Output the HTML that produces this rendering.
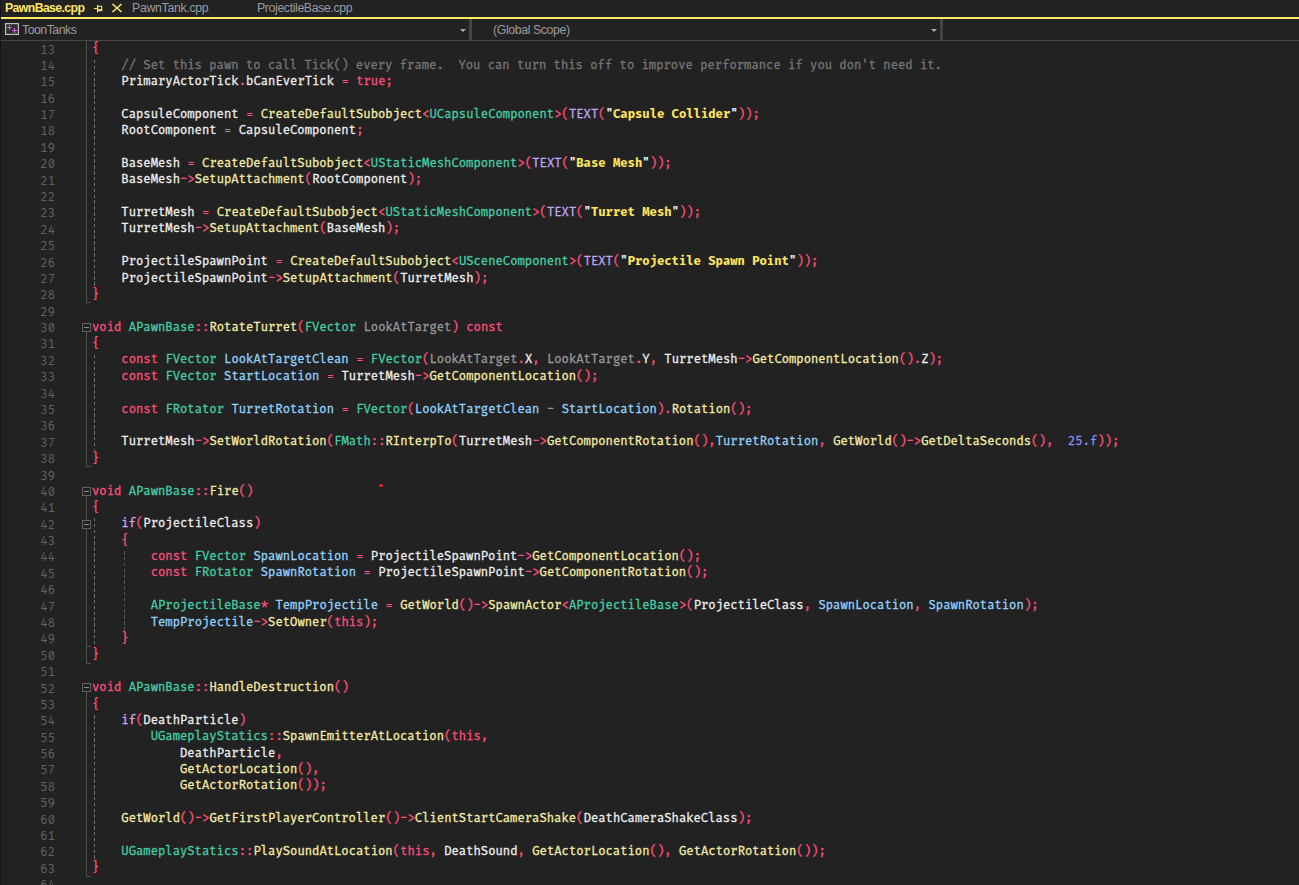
<!DOCTYPE html>
<html lang="en"><head><meta charset="utf-8"><title>PawnBase.cpp</title>
<style>
*{margin:0;padding:0;box-sizing:border-box}
html,body{width:1299px;height:885px;overflow:hidden;background:#222222}
body{position:relative;font-family:"Liberation Sans", "DejaVu Sans", sans-serif;-webkit-font-smoothing:antialiased}
.abs{position:absolute}
#edge{left:0;top:0;width:1px;height:885px;background:#161616}
#tabs{left:0;top:0;width:1299px;height:17px}
#tabs span{position:absolute;top:0;height:17px;line-height:17px;white-space:pre;font-size:12.3px}
#t1{left:5px;color:#ffe666;font-weight:bold;letter-spacing:-0.62px}
#t2{left:132px;color:#9a9aa2;letter-spacing:-0.3px}
#t3{left:257px;color:#9a9aa2;letter-spacing:-0.37px}
#yl{left:1px;top:17px;width:1298px;height:2px;background:#fdea60}
#nav{left:0;top:19px;width:1299px;height:22px;border-bottom:1px solid #464646}
#nav span{position:absolute;top:0;height:21px;line-height:23px;white-space:pre;font-size:12.3px;color:#9a9aa2;letter-spacing:-0.5px}
.sep{position:absolute;top:0;width:3px;height:21px;background:#444}
.arr{position:absolute;top:10px;width:0;height:0;border-left:3.5px solid transparent;border-right:3.5px solid transparent;border-top:3.5px solid #aaa}
#code{left:0;top:0;width:1299px;height:885px;font-family:"Fira Code", "DejaVu Sans Mono", "Liberation Mono", monospace;font-size:12.0px;font-size-adjust:ch-width 0.6115;font-variant-ligatures:none;font-feature-settings:"liga" 0,"calt" 0;font-weight:400;-webkit-text-stroke:0.3px}
.ln{position:absolute;left:0;width:55px;text-align:right;color:#636363;font-weight:400;-webkit-text-stroke:0;height:12px;line-height:0;white-space:pre}
.cl{position:absolute;left:0;width:1299px;height:12px;color:#f0f0f0;line-height:0;white-space:pre}
.cl span{position:absolute;top:0;display:block;line-height:0}
.cl span::before,.ln::before{content:"";display:inline-block;width:0;height:12px;vertical-align:baseline}
.k{color:#ff4f7c}
.t{color:#45d1a7}
.f{color:#f6eda6}
.s{color:#ffe45e;font-weight:bold;-webkit-text-stroke:0}
.q{color:#e8e8e8;font-weight:bold;-webkit-text-stroke:0}
.m{color:#bfa8f7}
.c{color:#dca2f2}
.n{color:#8e8df8}
.v{color:#92d4ff}
.p{color:#9b9b9b}
.cm{color:#787878}
.g{color:#999999}
.i{color:#f0f0f0}

.fl{position:absolute;left:86px;width:1px;background:#4e4e4e}
.fh{position:absolute;left:86px;width:5px;height:1px;background:#4e4e4e}
.fb{position:absolute;left:82px;width:9px;height:9px;border:1px solid #606060;background:#222}
.fb i{position:absolute;left:1px;top:3px;width:5px;height:1px;background:#8c8c8c}
.ig{position:absolute;width:1px;background:repeating-linear-gradient(to bottom,var(--c) 0,var(--c) 3.5px,transparent 3.5px,transparent 5.85px)}
</style></head>
<body>
<div id="tabs" class="abs"><span id="t1">PawnBase.cpp</span><svg class="abs" style="left:93px;top:4px" width="11" height="10" viewBox="0 0 11 10"><path d="M0.8 4.5H4.6" stroke="#ffe666" stroke-width="1.1" fill="none"/><path d="M4.6 0.9V8.4" stroke="#ffe666" stroke-width="1.2" fill="none"/><path d="M4.6 2.2H9.25M8.7 2.2V6" stroke="#ffe666" stroke-width="1.05" fill="none"/><rect x="4.6" y="5.2" width="4.65" height="2" fill="#ffe666"/></svg><svg class="abs" style="left:111px;top:3px" width="12" height="10" viewBox="0 0 12 10"><path d="M1.5 1L10.5 9M10.5 1L1.5 9" stroke="#ffe666" stroke-width="1.6" fill="none"/></svg><span id="t2">PawnTank.cpp</span><span id="t3">ProjectileBase.cpp</span></div>
<div id="yl" class="abs"></div>
<div id="nav" class="abs"><svg class="abs" style="left:5px;top:4px" width="14" height="12" viewBox="0 0 14 12"><rect x="0.6" y="0.6" width="12.8" height="10.8" fill="#2d2d2d" stroke="#bebebe" stroke-width="1.2"/><path d="M2 4.5H7M4.5 2V7M7 7.5H12M9.5 5V10" stroke="#cf62dc" stroke-width="1.15" fill="none"/></svg><span style="left:22px">ToonTanks</span><i class="arr" style="left:460px"></i><i class="sep" style="left:469px"></i><span style="left:493px;letter-spacing:-0.38px">(Global Scope)</span><i class="arr" style="left:931px"></i><i class="sep" style="left:940px"></i></div>
<div id="code" class="abs"><div class="fl" style="top:41px;height:261px"></div><div class="fh" style="top:302px"></div>
<div class="fl" style="top:332.0px;height:134.0px"></div><div class="fh" style="top:466px"></div>
<div class="fl" style="top:495.85px;height:167.15px"></div><div class="fh" style="top:663px"></div>
<div class="fl" style="top:692.47px;height:183.53px"></div><div class="fh" style="top:876px"></div>
<div class="fh" style="top:646px"></div>
<div class="fb" style="top:323px"><i></i></div>
<div class="fb" style="top:487px"><i></i></div>
<div class="fb" style="top:520px"><i></i></div>
<div class="fb" style="top:683px"><i></i></div>
<div class="ig" style="left:94px;top:59.59px;height:226.89px;--c:#707070"></div>
<div class="ig" style="left:94px;top:354.52px;height:95.81px;--c:#707070"></div>
<div class="ig" style="left:94px;top:518.37px;height:128.58px;--c:#707070"></div>
<div class="ig" style="left:124px;top:551.14px;height:79.42px;--c:#565656"></div>
<div class="ig" style="left:94px;top:714.99px;height:144.97px;--c:#707070"></div>
<div class="abs" style="left:379.2px;top:483.5px;width:3.8px;height:3.8px;background:#f01c20;border-radius:50%"></div>
<div class="ln" style="top:42px">13</div>
<div class="cl" style="top:40px"><span class="k" style="left:92.0px">{</span></div>
<div class="ln" style="top:58px">14</div>
<div class="cl" style="top:57px"><span class="cm" style="left:121.35px">// Set this pawn to call Tick() every frame.  You can turn this off to improve performance if you don't need it.</span></div>
<div class="ln" style="top:74px">15</div>
<div class="cl" style="top:73px"><span class="i" style="left:121.35px">PrimaryActorTick</span><span class="k" style="left:238.76px">.</span><span class="i" style="left:246.1px">bCanEverTick</span><span class="k" style="left:341.49px">=</span><span class="k" style="left:356.17px">true;</span></div>
<div class="ln" style="top:91px">16</div>
<div class="ln" style="top:107px">17</div>
<div class="cl" style="top:106px"><span class="i" style="left:121.35px">CapsuleComponent</span><span class="k" style="left:246.1px">=</span><span class="f" style="left:260.77px">CreateDefaultSubobject</span><span class="k" style="left:422.21px">&lt;</span><span class="t" style="left:429.55px">UCapsuleComponent</span><span class="k" style="left:554.29px">&gt;(</span><span class="m" style="left:568.97px">TEXT</span><span class="k" style="left:598.32px">(</span><span class="q" style="left:605.66px">"</span><span class="s" style="left:613.0px">Capsule Collider</span><span class="q" style="left:730.41px">"</span><span class="k" style="left:737.74px">));</span></div>
<div class="ln" style="top:123px">18</div>
<div class="cl" style="top:122px"><span class="i" style="left:121.35px">RootComponent</span><span class="g" style="left:224.08px">=</span><span class="i" style="left:238.76px">CapsuleComponent</span><span class="k" style="left:356.17px">;</span></div>
<div class="ln" style="top:140px">19</div>
<div class="ln" style="top:156px">20</div>
<div class="cl" style="top:155px"><span class="i" style="left:121.35px">BaseMesh</span><span class="k" style="left:187.39px">=</span><span class="f" style="left:202.07px">CreateDefaultSubobject</span><span class="k" style="left:363.51px">&lt;</span><span class="t" style="left:370.84px">UStaticMeshComponent</span><span class="k" style="left:517.6px">&gt;(</span><span class="m" style="left:532.28px">TEXT</span><span class="k" style="left:561.63px">(</span><span class="q" style="left:568.97px">"</span><span class="s" style="left:576.31px">Base Mesh</span><span class="q" style="left:642.35px">"</span><span class="k" style="left:649.69px">));</span></div>
<div class="ln" style="top:173px">21</div>
<div class="cl" style="top:171px"><span class="i" style="left:121.35px">BaseMesh</span><span class="k" style="left:180.06px">-&gt;</span><span class="f" style="left:194.73px">SetupAttachment</span><span class="k" style="left:304.8px">(</span><span class="i" style="left:312.14px">RootComponent</span><span class="k" style="left:407.53px">);</span></div>
<div class="ln" style="top:189px">22</div>
<div class="ln" style="top:205px">23</div>
<div class="cl" style="top:204px"><span class="i" style="left:121.35px">TurretMesh</span><span class="k" style="left:202.07px">=</span><span class="f" style="left:216.75px">CreateDefaultSubobject</span><span class="k" style="left:378.18px">&lt;</span><span class="t" style="left:385.52px">UStaticMeshComponent</span><span class="k" style="left:532.28px">&gt;(</span><span class="m" style="left:546.96px">TEXT</span><span class="k" style="left:576.31px">(</span><span class="q" style="left:583.65px">"</span><span class="s" style="left:590.98px">Turret Mesh</span><span class="q" style="left:671.7px">"</span><span class="k" style="left:679.04px">));</span></div>
<div class="ln" style="top:222px">24</div>
<div class="cl" style="top:220px"><span class="i" style="left:121.35px">TurretMesh</span><span class="k" style="left:194.73px">-&gt;</span><span class="f" style="left:209.41px">SetupAttachment</span><span class="k" style="left:319.48px">(</span><span class="i" style="left:326.82px">BaseMesh</span><span class="k" style="left:385.52px">);</span></div>
<div class="ln" style="top:238px">25</div>
<div class="ln" style="top:255px">26</div>
<div class="cl" style="top:253px"><span class="i" style="left:121.35px">ProjectileSpawnPoint</span><span class="k" style="left:275.45px">=</span><span class="f" style="left:290.13px">CreateDefaultSubobject</span><span class="k" style="left:451.56px">&lt;</span><span class="t" style="left:458.9px">USceneComponent</span><span class="k" style="left:568.97px">&gt;(</span><span class="m" style="left:583.65px">TEXT</span><span class="k" style="left:613.0px">(</span><span class="q" style="left:620.34px">"</span><span class="s" style="left:627.67px">Projectile Spawn Point</span><span class="q" style="left:789.11px">"</span><span class="k" style="left:796.45px">));</span></div>
<div class="ln" style="top:271px">27</div>
<div class="cl" style="top:270px"><span class="i" style="left:121.35px">ProjectileSpawnPoint</span><span class="k" style="left:268.11px">-&gt;</span><span class="f" style="left:282.79px">SetupAttachment</span><span class="k" style="left:392.86px">(</span><span class="i" style="left:400.2px">TurretMesh</span><span class="k" style="left:473.58px">);</span></div>
<div class="ln" style="top:287px">28</div>
<div class="cl" style="top:286px"><span class="k" style="left:92.0px">}</span></div>
<div class="ln" style="top:304px">29</div>
<div class="ln" style="top:320px">30</div>
<div class="cl" style="top:319px"><span class="k" style="left:92.0px">void</span><span class="t" style="left:128.69px">APawnBase</span><span class="k" style="left:194.73px">::</span><span class="f" style="left:209.41px">RotateTurret</span><span class="k" style="left:297.46px">(</span><span class="t" style="left:304.8px">FVector</span><span class="p" style="left:363.51px">LookAtTarget</span><span class="k" style="left:451.56px">)</span><span class="k" style="left:466.24px">const</span></div>
<div class="ln" style="top:336px">31</div>
<div class="cl" style="top:335px"><span class="k" style="left:92.0px">{</span></div>
<div class="ln" style="top:353px">32</div>
<div class="cl" style="top:351px"><span class="k" style="left:121.35px">const</span><span class="t" style="left:165.38px">FVector</span><span class="v" style="left:224.08px">LookAtTargetClean</span><span class="k" style="left:356.17px">=</span><span class="t" style="left:370.84px">FVector</span><span class="k" style="left:422.21px">(</span><span class="p" style="left:429.55px">LookAtTarget</span><span class="k" style="left:517.6px">.</span><span class="i" style="left:524.94px">X</span><span class="k" style="left:532.28px">,</span><span class="p" style="left:546.96px">LookAtTarget</span><span class="k" style="left:635.01px">.</span><span class="i" style="left:642.35px">Y</span><span class="k" style="left:649.69px">,</span><span class="i" style="left:664.36px">TurretMesh</span><span class="k" style="left:737.74px">-&gt;</span><span class="f" style="left:752.42px">GetComponentLocation</span><span class="k" style="left:899.18px">().</span><span class="i" style="left:921.19px">Z</span><span class="k" style="left:928.53px">);</span></div>
<div class="ln" style="top:369px">33</div>
<div class="cl" style="top:368px"><span class="k" style="left:121.35px">const</span><span class="t" style="left:165.38px">FVector</span><span class="v" style="left:224.08px">StartLocation</span><span class="k" style="left:326.82px">=</span><span class="i" style="left:341.49px">TurretMesh</span><span class="k" style="left:414.87px">-&gt;</span><span class="f" style="left:429.55px">GetComponentLocation</span><span class="k" style="left:576.31px">();</span></div>
<div class="ln" style="top:386px">34</div>
<div class="ln" style="top:402px">35</div>
<div class="cl" style="top:401px"><span class="k" style="left:121.35px">const</span><span class="t" style="left:165.38px">FRotator</span><span class="v" style="left:231.42px">TurretRotation</span><span class="k" style="left:341.49px">=</span><span class="t" style="left:356.17px">FVector</span><span class="k" style="left:407.53px">(</span><span class="v" style="left:414.87px">LookAtTargetClean</span><span class="g" style="left:546.96px">-</span><span class="v" style="left:561.63px">StartLocation</span><span class="k" style="left:657.03px">).</span><span class="f" style="left:671.7px">Rotation</span><span class="k" style="left:730.41px">();</span></div>
<div class="ln" style="top:418px">36</div>
<div class="ln" style="top:435px">37</div>
<div class="cl" style="top:433px"><span class="i" style="left:121.35px">TurretMesh</span><span class="k" style="left:194.73px">-&gt;</span><span class="f" style="left:209.41px">SetWorldRotation</span><span class="k" style="left:326.82px">(</span><span class="t" style="left:334.15px">FMath</span><span class="k" style="left:370.84px">::</span><span class="f" style="left:385.52px">RInterpTo</span><span class="k" style="left:451.56px">(</span><span class="i" style="left:458.9px">TurretMesh</span><span class="k" style="left:532.28px">-&gt;</span><span class="f" style="left:546.96px">GetComponentRotation</span><span class="k" style="left:693.72px">(),</span><span class="v" style="left:715.73px">TurretRotation</span><span class="k" style="left:818.46px">,</span><span class="f" style="left:833.14px">GetWorld</span><span class="k" style="left:891.84px">()-&gt;</span><span class="f" style="left:921.19px">GetDeltaSeconds</span><span class="k" style="left:1031.26px">(),</span><span class="n" style="left:1067.95px">25.f</span><span class="k" style="left:1097.31px">));</span></div>
<div class="ln" style="top:451px">38</div>
<div class="cl" style="top:450px"><span class="k" style="left:92.0px">}</span></div>
<div class="ln" style="top:468px">39</div>
<div class="ln" style="top:484px">40</div>
<div class="cl" style="top:483px"><span class="k" style="left:92.0px">void</span><span class="t" style="left:128.69px">APawnBase</span><span class="k" style="left:194.73px">::</span><span class="f" style="left:209.41px">Fire</span><span class="k" style="left:238.76px">()</span></div>
<div class="ln" style="top:500px">41</div>
<div class="cl" style="top:499px"><span class="k" style="left:92.0px">{</span></div>
<div class="ln" style="top:517px">42</div>
<div class="cl" style="top:515px"><span class="c" style="left:121.35px">if</span><span class="k" style="left:136.03px">(</span><span class="i" style="left:143.37px">ProjectileClass</span><span class="k" style="left:253.44px">)</span></div>
<div class="ln" style="top:533px">43</div>
<div class="cl" style="top:532px"><span class="k" style="left:121.35px">{</span></div>
<div class="ln" style="top:549px">44</div>
<div class="cl" style="top:548px"><span class="k" style="left:150.7px">const</span><span class="t" style="left:194.73px">FVector</span><span class="v" style="left:253.44px">SpawnLocation</span><span class="k" style="left:356.17px">=</span><span class="i" style="left:370.84px">ProjectileSpawnPoint</span><span class="k" style="left:517.6px">-&gt;</span><span class="f" style="left:532.28px">GetComponentLocation</span><span class="k" style="left:679.04px">();</span></div>
<div class="ln" style="top:566px">45</div>
<div class="cl" style="top:564px"><span class="k" style="left:150.7px">const</span><span class="t" style="left:194.73px">FRotator</span><span class="v" style="left:260.77px">SpawnRotation</span><span class="k" style="left:363.51px">=</span><span class="i" style="left:378.18px">ProjectileSpawnPoint</span><span class="k" style="left:524.94px">-&gt;</span><span class="f" style="left:539.62px">GetComponentRotation</span><span class="k" style="left:686.38px">();</span></div>
<div class="ln" style="top:582px">46</div>
<div class="ln" style="top:599px">47</div>
<div class="cl" style="top:597px"><span class="t" style="left:150.7px">AProjectileBase</span><span class="k" style="left:260.77px">*</span><span class="v" style="left:275.45px">TempProjectile</span><span class="k" style="left:385.52px">=</span><span class="f" style="left:400.2px">GetWorld</span><span class="k" style="left:458.9px">()-&gt;</span><span class="f" style="left:488.25px">SpawnActor</span><span class="k" style="left:561.63px">&lt;</span><span class="t" style="left:568.97px">AProjectileBase</span><span class="k" style="left:679.04px">&gt;(</span><span class="i" style="left:693.72px">ProjectileClass</span><span class="k" style="left:803.79px">,</span><span class="v" style="left:818.46px">SpawnLocation</span><span class="k" style="left:913.86px">,</span><span class="v" style="left:928.53px">SpawnRotation</span><span class="k" style="left:1023.93px">);</span></div>
<div class="ln" style="top:615px">48</div>
<div class="cl" style="top:614px"><span class="v" style="left:150.7px">TempProjectile</span><span class="k" style="left:253.44px">-&gt;</span><span class="f" style="left:268.11px">SetOwner</span><span class="k" style="left:326.82px">(this);</span></div>
<div class="ln" style="top:631px">49</div>
<div class="cl" style="top:630px"><span class="k" style="left:121.35px">}</span></div>
<div class="ln" style="top:648px">50</div>
<div class="cl" style="top:646px"><span class="k" style="left:92.0px">}</span></div>
<div class="ln" style="top:664px">51</div>
<div class="ln" style="top:681px">52</div>
<div class="cl" style="top:679px"><span class="k" style="left:92.0px">void</span><span class="t" style="left:128.69px">APawnBase</span><span class="k" style="left:194.73px">::</span><span class="f" style="left:209.41px">HandleDestruction</span><span class="k" style="left:334.15px">()</span></div>
<div class="ln" style="top:697px">53</div>
<div class="cl" style="top:696px"><span class="k" style="left:92.0px">{</span></div>
<div class="ln" style="top:713px">54</div>
<div class="cl" style="top:712px"><span class="c" style="left:121.35px">if</span><span class="k" style="left:136.03px">(</span><span class="i" style="left:143.37px">DeathParticle</span><span class="k" style="left:238.76px">)</span></div>
<div class="ln" style="top:730px">55</div>
<div class="cl" style="top:728px"><span class="t" style="left:150.7px">UGameplayStatics</span><span class="k" style="left:268.11px">::</span><span class="f" style="left:282.79px">SpawnEmitterAtLocation</span><span class="k" style="left:444.22px">(this,</span></div>
<div class="ln" style="top:746px">56</div>
<div class="cl" style="top:745px"><span class="i" style="left:180.06px">DeathParticle</span><span class="k" style="left:275.45px">,</span></div>
<div class="ln" style="top:762px">57</div>
<div class="cl" style="top:761px"><span class="f" style="left:180.06px">GetActorLocation</span><span class="k" style="left:297.46px">(),</span></div>
<div class="ln" style="top:779px">58</div>
<div class="cl" style="top:777px"><span class="f" style="left:180.06px">GetActorRotation</span><span class="k" style="left:297.46px">());</span></div>
<div class="ln" style="top:795px">59</div>
<div class="ln" style="top:812px">60</div>
<div class="cl" style="top:810px"><span class="f" style="left:121.35px">GetWorld</span><span class="k" style="left:180.06px">()-&gt;</span><span class="f" style="left:209.41px">GetFirstPlayerController</span><span class="k" style="left:385.52px">()-&gt;</span><span class="f" style="left:414.87px">ClientStartCameraShake</span><span class="k" style="left:576.31px">(</span><span class="i" style="left:583.65px">DeathCameraShakeClass</span><span class="k" style="left:737.74px">);</span></div>
<div class="ln" style="top:828px">61</div>
<div class="ln" style="top:844px">62</div>
<div class="cl" style="top:843px"><span class="t" style="left:121.35px">UGameplayStatics</span><span class="k" style="left:238.76px">::</span><span class="f" style="left:253.44px">PlaySoundAtLocation</span><span class="k" style="left:392.86px">(this,</span><span class="i" style="left:444.22px">DeathSound</span><span class="k" style="left:517.6px">,</span><span class="f" style="left:532.28px">GetActorLocation</span><span class="k" style="left:649.69px">(),</span><span class="f" style="left:679.04px">GetActorRotation</span><span class="k" style="left:796.45px">());</span></div>
<div class="ln" style="top:861px">63</div>
<div class="cl" style="top:859px"><span class="k" style="left:92.0px">}</span></div>
<div class="ln" style="top:877px">64</div></div>
<div id="edge" class="abs"></div>
</body></html>
